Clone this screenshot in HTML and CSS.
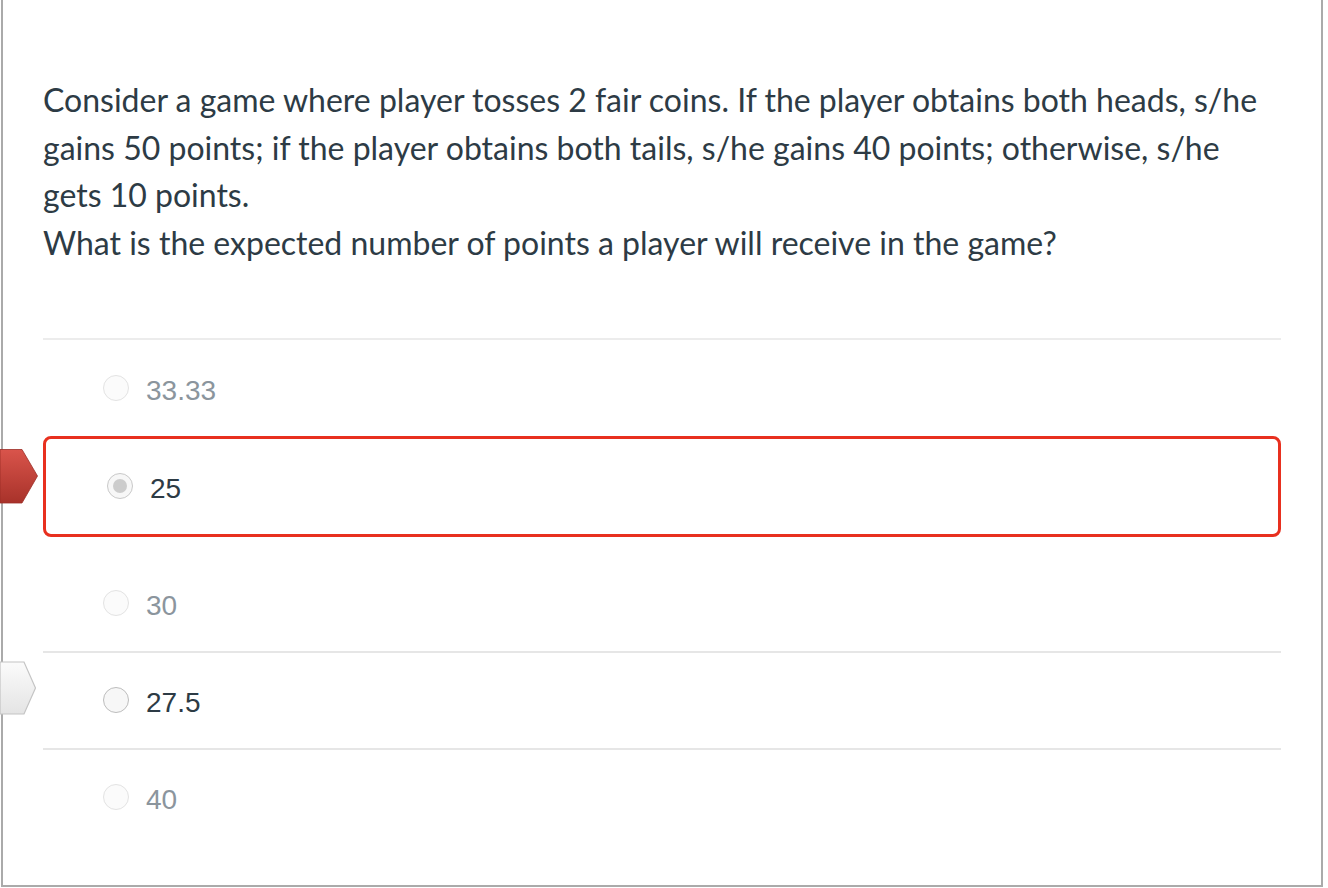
FILE: index.html
```html
<!DOCTYPE html>
<html>
<head>
<meta charset="utf-8">
<link rel="stylesheet" href="styles.css">
</head>
<body>
<div class="frame">
  <div class="question">
    <p>Consider a game where player tosses 2 fair coins. If the player obtains both heads, s/he gains 50 points; if the player obtains both tails, s/he gains 40 points; otherwise, s/he gets 10 points.</p>
    <p>What is the expected number of points a player will receive in the game?</p>
  </div>
  <div class="answers">
    <div class="answer faded"><span class="radio"></span><span class="label">33.33</span></div>
    <div class="answer selected">
      <svg class="flag flag-red" width="38" height="56" viewBox="0 0 38 56">
        <defs>
          <linearGradient id="gr" x1="0" y1="0" x2="0" y2="1">
            <stop offset="0" stop-color="#d9544b"/>
            <stop offset="1" stop-color="#a8322a"/>
          </linearGradient>
        </defs>
        <polygon points="0,0.5 22,0.5 37.5,27 22,54 0,54" fill="url(#gr)" stroke="#9c2f27" stroke-width="0.8"/>
      </svg>
      <span class="radio checked"></span><span class="label">25</span>
    </div>
    <div class="answer faded"><span class="radio"></span><span class="label">30</span></div>
    <div class="answer">
      <svg class="flag flag-white" width="38" height="56" viewBox="0 0 38 56">
        <defs>
          <linearGradient id="gw" x1="0" y1="0" x2="0" y2="1">
            <stop offset="0" stop-color="#fbfbfb"/>
            <stop offset="1" stop-color="#e4e4e4"/>
          </linearGradient>
        </defs>
        <polygon points="0,1 24,1 35.5,27 24,53 0,53" fill="url(#gw)" stroke="#c4c4c4" stroke-width="1.2"/>
      </svg>
      <span class="radio dark"></span><span class="label">27.5</span>
    </div>
    <div class="answer faded last"><span class="radio"></span><span class="label">40</span></div>
  </div>
</div>
</body>
</html>
```

FILE: styles.css
```css
html, body {
  margin: 0;
  padding: 0;
  background: #ffffff;
}

.frame {
  margin-left: 1px;
  width: 1322px;
  height: 887px;
  box-sizing: border-box;
  border-left: 2px solid #aaaaaa;
  border-right: 2px solid #aaaaaa;
  border-bottom: 2px solid #aaaaaa;
  padding: 76px 40px 0 40px;
}

.question {
  font-family: Lato, "Open Sans", sans-serif;
  font-size: 32px;
  line-height: 47.7px;
  color: #2d3b45;
}

.question p {
  margin: 0;
}

.answers {
  margin-top: 71px;
  border-top: 2px solid #ececec;
}

.answer {
  position: relative;
  display: flex;
  align-items: center;
  height: 95px;
  padding-left: 60px;
  border-bottom: 2px solid #e6e6e6;
  font-family: "Liberation Sans", Arial, sans-serif;
  font-size: 28px;
  color: #2d3b45;
}

.answer:first-child {
  height: 96px;
  border-bottom: none;
}

.answer.last {
  border-bottom: none;
}

.answer.selected {
  height: 95px;
  margin-bottom: 19px;
  border: 3px solid #e8301f;
  border-radius: 8px;
  padding-left: 61px;
}

.answer.faded .label {
  color: #8b959d;
}

.radio {
  width: 24px;
  height: 24px;
  border-radius: 50%;
  border: 1px solid #e3e3e3;
  background: #fbfbfb;
  margin-right: 17px;
  flex: none;
  position: relative;
}

.radio.dark {
  border-color: #bdbdbd;
  background: #f7f7f7;
}

.radio.checked {
  border-color: #c9c9c9;
  background: #f7f7f7;
}

.radio.checked::after {
  content: "";
  position: absolute;
  left: 5px;
  top: 5px;
  width: 14px;
  height: 14px;
  border-radius: 50%;
  background: #cccccc;
}

.label {
  position: relative;
  top: 3px;
}

.flag {
  position: absolute;
  display: block;
}

.flag-red {
  left: -46px;
  top: 10px;
}

.flag-white {
  left: -43px;
  top: 8px;
}
```
